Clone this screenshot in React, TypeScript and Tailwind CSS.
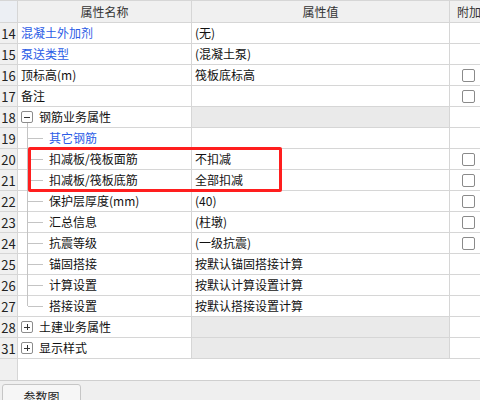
import React from "react";

type Row = {
  no: string;
  name: string;
  value?: string;
  blue?: boolean;
  check?: boolean;
  group?: "open" | "closed";
  child?: "mid" | "last";
  grayValue?: boolean;
};

const rows: Row[] = [
  { no: "14", name: "混凝土外加剂", value: "(无)", blue: true },
  { no: "15", name: "泵送类型", value: "(混凝土泵)", blue: true },
  { no: "16", name: "顶标高(m)", value: "筏板底标高", check: true },
  { no: "17", name: "备注", value: "", check: true },
  { no: "18", name: "钢筋业务属性", group: "open", grayValue: true },
  { no: "19", name: "其它钢筋", blue: true, child: "mid" },
  { no: "20", name: "扣减板/筏板面筋", value: "不扣减", check: true, child: "mid" },
  { no: "21", name: "扣减板/筏板底筋", value: "全部扣减", check: true, child: "mid" },
  { no: "22", name: "保护层厚度(mm)", value: "(40)", check: true, child: "mid" },
  { no: "23", name: "汇总信息", value: "(柱墩)", check: true, child: "mid" },
  { no: "24", name: "抗震等级", value: "(一级抗震)", check: true, child: "mid" },
  { no: "25", name: "锚固搭接", value: "按默认锚固搭接计算", child: "mid" },
  { no: "26", name: "计算设置", value: "按默认计算设置计算", child: "mid" },
  { no: "27", name: "搭接设置", value: "按默认搭接设置计算", child: "last" },
  { no: "28", name: "土建业务属性", group: "closed", grayValue: true },
  { no: "31", name: "显示样式", group: "closed", grayValue: true },
];

function ToggleBox({ open }: { open: boolean }) {
  return (
    <span className="relative w-[12px] h-[12px] border border-[#8c8c8c] rounded-[2px] bg-white shrink-0">
      <span className="absolute left-[2px] right-[2px] top-[4.5px] h-px bg-[#333]" />
      {!open && <span className="absolute top-[2px] bottom-[2px] left-[4.5px] w-px bg-[#333]" />}
    </span>
  );
}

function Check() {
  return <span className="w-[13px] h-[13px] border border-[#8a8a8a] rounded-[2px] bg-white" />;
}

function NameCell({ r }: { r: Row }) {
  const color = r.blue ? "text-[#2b5ce6]" : "text-[#111]";
  if (r.group) {
    return (
      <div className="relative flex items-center pl-[3px] gap-[6px] h-full">
        <ToggleBox open={r.group === "open"} />
        <span className={color}>{r.name}</span>
        {r.group === "open" && (
          <span className="absolute left-[9px] top-[16px] bottom-[-1px] w-px bg-[#c4c4c4]" />
        )}
      </div>
    );
  }
  if (r.child) {
    return (
      <div className="relative flex items-center pl-[31px] h-full">
        <span
          className={`absolute left-[9px] top-[-1px] w-px bg-[#c4c4c4] ${r.child === "last" ? "h-[11px]" : "bottom-[-1px]"}`}
        />
        <span className="absolute left-[10px] top-[10px] w-[15px] h-px bg-[#c4c4c4]" />
        <span className={color}>{r.name}</span>
      </div>
    );
  }
  return (
    <div className="flex items-center pl-[3px] h-full">
      <span className={color}>{r.name}</span>
    </div>
  );
}

export default function App() {
  return (
    <div className="relative w-[480px] h-[400px] overflow-hidden bg-white text-[12px] leading-none font-['Noto_Sans_CJK_SC','Microsoft_YaHei',sans-serif] text-[#111]">
      {/* header */}
      <div className="grid grid-cols-[18px_174px_258px_30px] h-[23px] border-t border-b border-[#d6d6d6] bg-[#f0f0f0]">
        <div className="border-r border-[#d6d6d6] bg-[#eceff4]" />
        <div className="border-r border-[#d6d6d6] flex items-center justify-center text-[#333]">属性名称</div>
        <div className="border-r border-[#d6d6d6] flex items-center justify-center text-[#333]">属性值</div>
        <div className="flex items-center pl-[7px] whitespace-nowrap overflow-hidden text-[#333]">附加属性</div>
      </div>

      {rows.map((r) => (
        <div key={r.no} className="grid grid-cols-[18px_174px_258px_30px] h-[21px] border-b border-[#d6d6d6]">
          <div className="border-r border-[#d6d6d6] bg-[#f0f0f0] flex items-center justify-center text-[13px] text-[#222]">
            {r.no}
          </div>
          <div className="border-r border-[#d6d6d6]">
            <NameCell r={r} />
          </div>
          <div className={`border-r border-[#d6d6d6] flex items-center pl-[3px] ${r.grayValue ? "bg-[#eaeaea]" : ""}`}>
            {r.value}
          </div>
          <div className="flex items-center pl-[12px]">{r.check && <Check />}</div>
        </div>
      ))}

      {/* empty area */}
      <div className="grid grid-cols-[18px_1fr] h-[22px] border-b border-[#cfcfcf]">
        <div className="border-r border-[#d6d6d6] bg-[#f0f0f0]" />
        <div />
      </div>

      {/* bottom tabs */}
      <div className="h-[40px] bg-[#efefef] pl-[2px] pt-[3px]">
        <div className="w-[79px] h-[30px] border border-[#c6c6c6] rounded-t-[3px] bg-[#f6f6f6] flex justify-center pt-[6px] text-[#222]">
          参数图
        </div>
      </div>

      {/* highlight */}
      <div className="absolute left-[28px] top-[147px] w-[254px] h-[45px] border-[3px] border-[#ff1e1e] rounded-[2px] pointer-events-none" />
    </div>
  );
}
